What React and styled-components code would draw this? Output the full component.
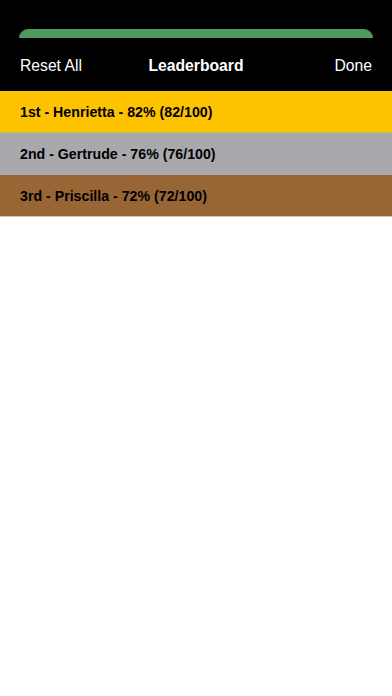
import React from "react";
import styled, { createGlobalStyle } from "styled-components";

const GlobalStyle = createGlobalStyle`
  html, body {
    margin: 0;
    padding: 0;
    background: #fff;
    font-family: "Liberation Sans", Arial, sans-serif;
  }
`;

const Page = styled.div`
  width: 392px;
  min-height: 696px;
  background: #fff;
`;

const Top = styled.div`
  background: #000;
  padding: 29px 19px 0;
`;

const Tab = styled.div`
  height: 9px;
  background: #4f995f;
  border-radius: 10px 10px 0 0;
`;

const NavBar = styled.div`
  height: 53px;
  display: grid;
  grid-template-columns: 1fr auto 1fr;
  align-items: center;
  padding: 2px 1px 0;
  box-sizing: border-box;
  color: #fff;
  font-size: 15.7px;
`;

const NavTitle = styled.span`
  font-weight: bold;
`;

const NavButton = styled.span`
  justify-self: ${(p) => (p.end ? "end" : "start")};
`;

const Row = styled.div`
  height: 41px;
  display: flex;
  align-items: center;
  padding: 0 20px;
  background: ${(p) => p.bg};
  border-bottom: 1px solid ${(p) => p.line};
  font-size: 14.2px;
  font-weight: bold;
  color: #000;
`;

const entries = [
  { text: "1st - Henrietta - 82% (82/100)", bg: "#fec300", line: "#c9b45f" },
  { text: "2nd - Gertrude - 76% (76/100)", bg: "#a9a8ad", line: "#a9a8ad" },
  { text: "3rd - Priscilla - 72% (72/100)", bg: "#986535", line: "#d9c7b5" },
];

export default function App() {
  return (
    <Page>
      <GlobalStyle />
      <Top>
        <Tab />
        <NavBar>
          <NavButton>Reset All</NavButton>
          <NavTitle>Leaderboard</NavTitle>
          <NavButton end>Done</NavButton>
        </NavBar>
      </Top>
      {entries.map((e) => (
        <Row key={e.text} bg={e.bg} line={e.line}>
          {e.text}
        </Row>
      ))}
    </Page>
  );
}
